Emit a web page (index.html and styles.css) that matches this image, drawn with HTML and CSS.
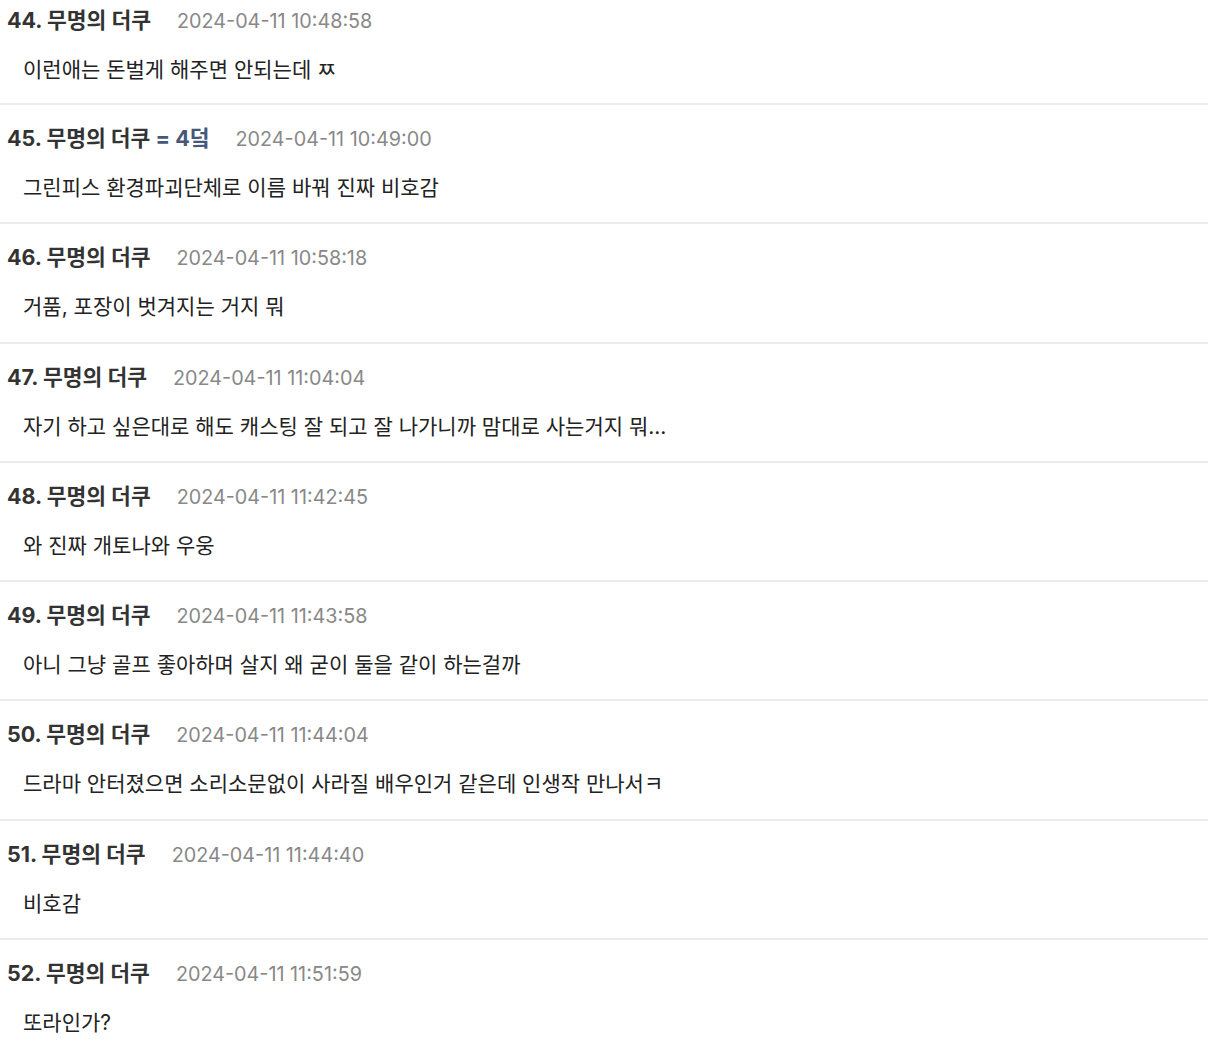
FILE: index.html
```html
<!DOCTYPE html>
<html lang="ko">
<head>
<meta charset="utf-8">
<title>댓글</title>
<link rel="stylesheet" href="styles.css">
</head>
<body>
<ul class="comments">
  <li class="comment">
    <div class="head"><span class="author">44. 무명의 더쿠</span><span class="time">2024-04-11 10:48:58</span></div>
    <div class="body">이런애는 돈벌게 해주면 안되는데 ㅉ</div>
  </li>
  <li class="comment">
    <div class="head"><span class="author">45. 무명의 더쿠 <span class="tag">= 4덬</span></span><span class="time">2024-04-11 10:49:00</span></div>
    <div class="body">그린피스 환경파괴단체로 이름 바꿔 진짜 비호감</div>
  </li>
  <li class="comment">
    <div class="head"><span class="author">46. 무명의 더쿠</span><span class="time">2024-04-11 10:58:18</span></div>
    <div class="body">거품, 포장이 벗겨지는 거지 뭐</div>
  </li>
  <li class="comment">
    <div class="head"><span class="author">47. 무명의 더쿠</span><span class="time">2024-04-11 11:04:04</span></div>
    <div class="body">자기 하고 싶은대로 해도 캐스팅 잘 되고 잘 나가니까 맘대로 사는거지 뭐...</div>
  </li>
  <li class="comment">
    <div class="head"><span class="author">48. 무명의 더쿠</span><span class="time">2024-04-11 11:42:45</span></div>
    <div class="body">와 진짜 개토나와 우웅</div>
  </li>
  <li class="comment">
    <div class="head"><span class="author">49. 무명의 더쿠</span><span class="time">2024-04-11 11:43:58</span></div>
    <div class="body">아니 그냥 골프 좋아하며 살지 왜 굳이 둘을 같이 하는걸까</div>
  </li>
  <li class="comment">
    <div class="head"><span class="author">50. 무명의 더쿠</span><span class="time">2024-04-11 11:44:04</span></div>
    <div class="body">드라마 안터졌으면 소리소문없이 사라질 배우인거 같은데 인생작 만나서ㅋ</div>
  </li>
  <li class="comment">
    <div class="head"><span class="author">51. 무명의 더쿠</span><span class="time">2024-04-11 11:44:40</span></div>
    <div class="body">비호감</div>
  </li>
  <li class="comment">
    <div class="head"><span class="author">52. 무명의 더쿠</span><span class="time">2024-04-11 11:51:59</span></div>
    <div class="body">또라인가?</div>
  </li>
</ul>
</body>
</html>
```
FILE: styles.css
```css
html, body {
  margin: 0;
  padding: 0;
  background: #ffffff;
}

body {
  font-family: Inter, "Noto Sans CJK KR", sans-serif;
  color: #222;
}

.comments {
  list-style: none;
  margin: 0;
  padding: 0;
}

.comment {
  padding: 18px 0 19.3px 7px;
  border-bottom: 2px solid #ebebeb;
}

.comment:first-child {
  padding-top: 5px;
  padding-bottom: 18px;
}

.head {
  display: flex;
  align-items: baseline;
  height: 30px;
  line-height: 30px;
  white-space: nowrap;
}

.author {
  font-size: 21.5px;
  font-weight: 700;
  color: #333;
}

.tag {
  color: #45577a;
}

.time {
  margin-left: 26px;
  font-size: 19.8px;
  color: #888;
}

.body {
  margin-top: 20px;
  padding-left: 16px;
  height: 30px;
  line-height: 30px;
  font-size: 21px;
  color: #222;
}
```
